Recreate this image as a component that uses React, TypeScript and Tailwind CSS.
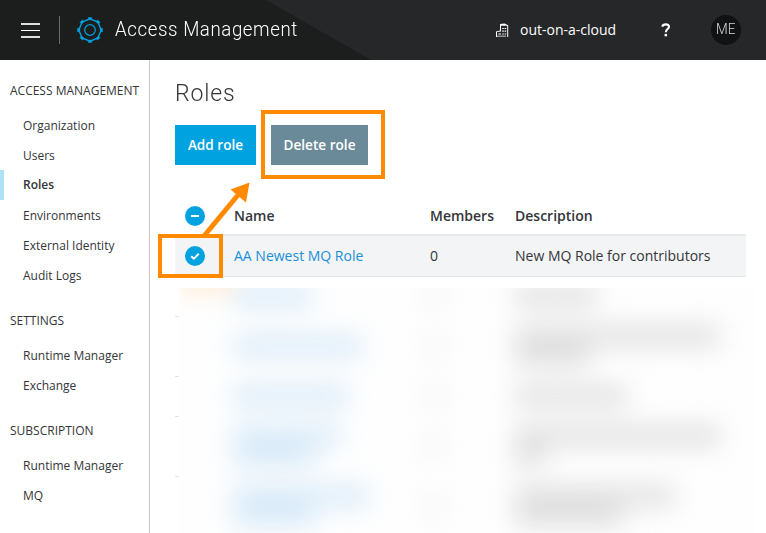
import React from 'react';

type NavGroup = { title: string; items: string[] };

const groups: NavGroup[] = [
  { title: 'ACCESS MANAGEMENT', items: ['Organization', 'Users', 'Roles', 'Environments', 'External Identity', 'Audit Logs'] },
  { title: 'SETTINGS', items: ['Runtime Manager', 'Exchange'] },
  { title: 'SUBSCRIPTION', items: ['Runtime Manager', 'MQ'] },
];

type HiddenRow = { tall: boolean; name: string[]; desc: string[] };

const hiddenRows: HiddenRow[] = [
  { tall: false, name: ['w-[78px]'], desc: ['w-[82px]'] },
  { tall: true, name: ['w-[128px]'], desc: ['w-[205px]', 'w-[75px]'] },
  { tall: false, name: ['w-[114px]'], desc: ['w-[112px]'] },
  { tall: true, name: ['w-[106px]', 'w-[80px]'], desc: ['w-[205px]', 'w-[30px]'] },
  { tall: true, name: ['w-[134px]', 'w-[80px]'], desc: ['w-[160px]', 'w-[108px]'] },
];

function Gear() {
  const angles = [0, 45, 90, 135, 180, 225, 270, 315];
  return (
    <svg width="28" height="28" viewBox="-14 -14 28 28" fill="none" stroke="#00a2df">
      <circle r="5.3" strokeWidth="1.2" />
      <path d="M0 -11.2L7.9 -7.9L11.2 0L7.9 7.9L0 11.2L-7.9 7.9L-11.2 0L-7.9 -7.9Z" strokeWidth="1.4" />
      {angles.map((a) => (
        <path key={a} transform={`rotate(${a})`} d="M-1.9 -12.5H1.9C1.7 -11 1 -10 0 -10C-1 -10 -1.7 -11 -1.9 -12.5Z" fill="#00a2df" strokeWidth="0.4" />
      ))}
    </svg>
  );
}

function Building() {
  return (
    <svg width="13" height="15" viewBox="0 0 13 15" fill="#fff">
      <path d="M0 14V8.4L4 7.4V1L8.5 0.6L12.2 2.2V14H11.2V2.8H5V8.4L1 9V14Z" />
      <path d="M6.2 4.9H7.8V6H6.2ZM8.6 4.9H10.2V6H8.6ZM6.2 7.6H7.8V8.8H6.2ZM8.6 7.6H10.2V8.8H8.6ZM6.2 10.4H7.8V11.5H6.2ZM8.6 10.4H10.2V11.5H8.6ZM2.4 10.4H5V11.5H2.4ZM1 12.8H10V13.6H1Z" />
    </svg>
  );
}

function Header() {
  return (
    <header className="relative flex h-[60px] items-center bg-[#262729] text-white">
      <svg className="absolute left-0 top-0" width="372" height="60">
        <path d="M0 0H266L371 60H0Z" fill="#1c1d1d" />
      </svg>
      <div className="relative flex w-full items-center">
        <div className="ml-[21px] flex w-[19px] flex-col gap-[5px] pt-px">
          <i className="h-[1.5px] bg-[#ddd]" />
          <i className="h-[1.5px] bg-white" />
          <i className="h-[1.5px] bg-[#ddd]" />
        </div>
        <div className="ml-[19px] h-7 w-px bg-[#696a6a]" />
        <div className="ml-4"><Gear /></div>
        <h2 className="-mt-[3px] ml-[11px] w-[371px] origin-left scale-x-[0.933] whitespace-nowrap font-[Roboto] text-[20px] font-light leading-6 tracking-[0.63px]">Access Management</h2>
        <div className="ml-[10px]"><Building /></div>
        <span className="-mt-[2px] ml-[11px] w-[141px] text-[14px]">out-on-a-cloud</span>
        <svg width="10" height="14" viewBox="0 0 10 14" fill="none" stroke="#fff" strokeWidth="2.2">
          <path d="M1.2 3.6C2 .6 8 .4 8 3.7C8 6.1 4.8 6 4.8 9.2" />
          <path d="M4.8 10.9V13.3" strokeWidth="2.5" />
        </svg>
        <div className="ml-[40px] flex size-[30px] items-center justify-center rounded-full bg-[#111213] pb-[2px] font-[Roboto] text-[15px] font-light text-[#d8d8d8]"><span className="scale-x-90">ME</span></div>
      </div>
    </header>
  );
}

function Sidebar() {
  return (
    <nav className="w-[150px] shrink-0 border-r border-[#c9c9c9] pt-[15px] text-[12px] leading-[31px]">
      {groups.map((g) => (
        <section key={g.title} className="mb-[15px]">
          <h3 className="mb-[5px] h-[30px] whitespace-nowrap pl-[10px]">{g.title}</h3>
          {g.items.map((item) => (
            <div key={item} className={item === 'Roles' ? 'h-[30px] border-l-4 border-[#ade1f5] pl-[19px] font-semibold leading-[29px]' : 'h-[30px] pl-[23px]'}>{item}</div>
          ))}
        </section>
      ))}
    </nav>
  );
}

function HiddenRows() {
  return (
    <div className="mt-[11px] flex h-[245px]">
      <div className="w-1 shrink-0">
        <div className="h-[29px] border-b border-[#e3e3e3]" />
        <div className="h-[60px] border-b border-[#e3e3e3]" />
        <div className="h-10 border-b border-[#e3e3e3]" />
        <div className="h-[60px] border-b border-[#e3e3e3]" />
      </div>
      <div className="h-[245px] w-[575px] overflow-hidden bg-[#fefefe]">
        <div className="-mt-3 blur-[13px]">
          {hiddenRows.map((row, i) => (
            <div key={i} className={row.tall ? 'flex h-[60px] items-center' : 'flex h-10 items-center'}>
              <div className={i === 0 ? 'mb-7 h-3 w-[55px] bg-[#ffdfb8]' : 'w-[55px]'} />
              <div className="flex w-[196px] flex-col">
                {row.name.map((w, j) => <div key={j} className={`h-5 bg-[#d8eaf8] ${w}`} />)}
              </div>
              <div className="w-[85px]"><div className="h-4 w-2 bg-[#e0e0e0]" /></div>
              <div className="flex flex-col">
                {row.desc.map((w, j) => <div key={j} className={`h-5 bg-[#dfdfdf] ${w}`} />)}
              </div>
            </div>
          ))}
        </div>
      </div>
    </div>
  );
}

function Mark({ checked }: { checked?: boolean }) {
  return (
    <svg width="20" height="20" viewBox="0 0 20 20" fill="none" stroke="#fff" strokeWidth="2">
      <circle cx="10" cy="10" r="10" fill="#00a2df" stroke="none" />
      <path d={checked ? 'M6.2 10.3L8.8 12.7L13.8 7.8' : 'M6 10H14'} />
    </svg>
  );
}

export default function App() {
  return (
    <div className="relative h-[533px] w-[766px] overflow-hidden bg-white font-['Open_Sans',sans-serif] text-[#333538]">
      <Header />
      <div className="flex h-[473px]">
        <Sidebar />
        <main className="w-[616px] pl-[25px]">
          <h1 className="h-[65px] origin-left scale-x-[0.94] pt-[16px] font-[Roboto] text-[24.5px] font-light leading-[34px] tracking-[0.9px]">Roles</h1>
          <div className="flex h-[71px] gap-[15px] text-[13.6px] font-semibold text-white">
            <button className="h-10 w-[81px] bg-[#00a2df]">Add role</button>
            <button className="h-10 w-[97px] bg-[#6b8a99]">Delete role</button>
          </div>
          <div className="w-[571px] text-[14px]">
            <div className="grid h-10 grid-cols-[59px_196px_85px_1fr] items-center border-b-2 border-[#e6e8ea] pt-[2px] font-semibold leading-[18px]">
              <span className="pl-[10px]"><Mark /></span>
              <span>Name</span><span>Members</span><span>Description</span>
            </div>
            <div className="grid h-[41px] grid-cols-[59px_196px_85px_1fr] items-center border-b border-[#e4e5e7] bg-[#f3f4f6] leading-[18px]">
              <span className="pl-[10px]"><Mark checked /></span>
              <span className="text-[#1a8fd5]">AA Newest MQ Role</span><span>0</span><span>New MQ Role for contributors</span>
            </div>
          </div>
          <HiddenRows />
        </main>
      </div>
      <div className="absolute left-[158px] top-[234px] h-[44px] w-[65px] border-4 border-[#ff8a00]" />
      <div className="absolute left-[261px] top-[110px] h-[69px] w-[124px] border-4 border-[#ff8a00]" />
      <svg className="absolute left-[195px] top-[178px]" width="60" height="60" fill="#ff8a00">
        <path d="M9 58L43 17" stroke="#ff8a00" strokeWidth="5" />
        <path d="M54.5 4.5L35.5 11.5L51 24.5Z" />
      </svg>
    </div>
  );
}
